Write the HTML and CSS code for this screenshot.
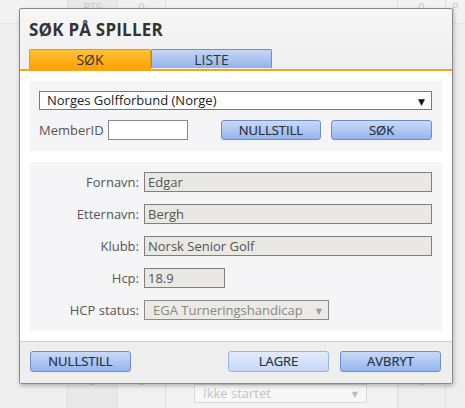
FILE: index.html
```html
<!DOCTYPE html>
<html lang="no">
<head>
<meta charset="utf-8">
<title>Søk på spiller</title>
<link rel="stylesheet" href="styles.css">
</head>
<body>
<div class="backdrop">
  <div class="brow brow-head">
    <div class="bc c1"></div>
    <div class="bc c2">PTS</div>
    <div class="bc c3">0</div>
    <div class="bc c4"></div>
    <div class="bc c5">0</div>
    <div class="bc c6">P</div>
  </div>
  <div class="brow brow-mid">
    <div class="bc c1"></div>
    <div class="bc c2"></div>
    <div class="bc c3"></div>
    <div class="bc c4"></div>
    <div class="bc c5"></div>
    <div class="bc c6"></div>
  </div>
  <div class="brow brow-foot">
    <div class="bc c1"></div>
    <div class="bc c2">0</div>
    <div class="bc c3">0</div>
    <div class="bc c4"><div class="bsel">Ikke startet<span class="barrow">&#9660;</span></div></div>
    <div class="bc c5">0</div>
    <div class="bc c6"></div>
  </div>
</div>

<div class="dialog">
  <div class="dlg-head">
    <h1 class="title">SØK PÅ SPILLER</h1>
    <div class="tabs">
      <div class="tab tab-active">SØK</div>
      <div class="tab tab-idle">LISTE</div>
    </div>
  </div>
  <div class="dlg-body">
    <div class="panel panel-search">
      <div class="sel sel-org">Norges Golfforbund (Norge)<span class="arrow">&#9660;</span></div>
      <div class="search-row">
        <label class="lbl-member">MemberID</label>
        <div class="inp inp-member"></div>
        <div class="btn btn-reset">NULLSTILL</div>
        <div class="btn btn-search">SØK</div>
      </div>
    </div>
    <div class="panel panel-info">
      <div class="frow"><span class="flbl">Fornavn:</span><div class="finp">Edgar</div></div>
      <div class="frow"><span class="flbl">Etternavn:</span><div class="finp">Bergh</div></div>
      <div class="frow"><span class="flbl">Klubb:</span><div class="finp">Norsk Senior Golf</div></div>
      <div class="frow"><span class="flbl">Hcp:</span><div class="finp finp-hcp">18.9</div></div>
      <div class="frow"><span class="flbl">HCP status:</span><div class="finp finp-status">EGA Turneringshandicap<span class="arrow arrow-dim">&#9660;</span></div></div>
    </div>
  </div>
  <div class="dlg-foot">
    <div class="btn btn-foot">NULLSTILL</div>
    <div class="foot-right">
      <div class="btn btn-foot btn-light">LAGRE</div>
      <div class="btn btn-foot">AVBRYT</div>
    </div>
  </div>
</div>
</body>
</html>
```

FILE: styles.css
```css
* { box-sizing: border-box; }
html, body { margin: 0; padding: 0; }
body {
  width: 465px;
  height: 408px;
  overflow: hidden;
  background: #eeeeee;
  font-family: "Open Sans", "DejaVu Sans", sans-serif;
  position: relative;
}

/* backdrop table */
.backdrop {
  display: flex;
  flex-direction: column;
  height: 408px;
  color: #c8c8c8;
  font-size: 13px;
}
.brow { display: flex; }
.brow-head { height: 24px; background: #f2f2f2; border-bottom: 1px solid #e2e2e2; }
.brow-mid { height: 346px; }
.brow-foot { flex: 1; }
.bc { border-right: 1px solid #e0e0e0; text-align: center; line-height: 20px; }
.c1 { width: 68px; }
.c2 { width: 50px; background: #e9e9e9; }
.c3 { width: 48px; background: #f1f1f1; }
.c4 { width: 232px; background: #f3f3f3; padding: 14px 0 0 28px; }
.c5 { width: 48px; }
.c6 { flex: 1; border-right: none; text-align: left; padding-left: 6px; }
.brow-head .bc { line-height: 14px; font-size: 11px; }
.bsel {
  width: 173px;
  height: 19px;
  border: 1px solid #d8d8d8;
  background: #f7f7f7;
  text-align: left;
  padding-left: 8px;
  line-height: 17px;
  color: #c4c4c4;
  font-size: 13px;
  position: relative;
}
.barrow { position: absolute; right: 8px; top: 0; font-size: 8px; color: #bbb; }

/* dialog */
.dialog {
  position: absolute;
  left: 19px;
  top: 8px;
  width: 434px;
  height: 376px;
  border: 1px solid #8a8a8a;
  border-radius: 2px;
  background: linear-gradient(#f6f6f6, #eeeeee 70px);
  box-shadow: 1px 2px 4px rgba(0,0,0,0.25);
  display: flex;
  flex-direction: column;
}
.dlg-head { padding: 0 0 0 9px; border-bottom: 2px solid #f0a81c; }
.title {
  margin: 0;
  padding: 9px 0 0 0;
  height: 40px;
  font-size: 17px;
  font-weight: 700;
  color: #333;
  line-height: 24px;
  letter-spacing: 0.2px;
}
.tabs { display: flex; }
.tab {
  width: 122px;
  height: 20px;
  font-size: 14px;
  font-weight: 400;
  color: #333;
  text-align: center;
  line-height: 19px;
  border-radius: 2px 2px 0 0;
}
.tab-active {
  background: linear-gradient(#ffc23a, #ffa000);
  border: 1px solid #e59a1a;
  border-bottom: none;
}
.tab-idle {
  width: 121px;
  background: linear-gradient(#c5d6f6, #93b3ec);
  border: 1px solid #6e8fcb;
  border-bottom: none;
  height: 19px;
}

.dlg-body {
  background: #ffffff;
  padding: 10px;
  display: flex;
  flex-direction: column;
  gap: 11px;
  border-bottom: 1px solid #cfcfcf;
}
.panel { background: #f5f5f7; }
.panel-search { height: 70px; padding: 10px 10px 0 9px; }
.sel {
  height: 19px;
  border: 1px solid #7a7a7a;
  background: #fff;
  font-size: 13px;
  color: #222;
  line-height: 17px;
  padding-left: 7px;
  position: relative;
}
.arrow { position: absolute; right: 6px; top: 1px; font-size: 9px; color: #111; }
.arrow-dim { color: #999; right: 6px; font-size: 8px; }
.search-row { display: flex; align-items: center; margin-top: 10px; height: 20px; }
.lbl-member { font-size: 13px; color: #555; width: 69px; }
.inp { height: 20px; border: 1px solid #888; background: #fff; }
.inp-member { width: 80px; margin-right: 33px; }
.btn {
  height: 20px;
  border: 1px solid #6f8ec6;
  border-radius: 3px;
  background: linear-gradient(#c9daf8, #95b5ec);
  font-size: 13px;
  font-weight: 400;
  color: #2a2f3a;
  text-align: center;
  line-height: 18px;
  -webkit-text-stroke: 0.2px #2a2f3a;
}
.btn-reset { width: 100px; margin-right: 10px; }
.btn-search { width: 101px; }

.panel-info {
  height: 169px;
  padding: 10px 10px 0 0;
  display: flex;
  flex-direction: column;
  gap: 12px;
}
.frow { display: flex; align-items: center; height: 20px; }
.flbl { width: 110px; text-align: right; font-size: 13px; color: #555; padding-right: 1px; }
.finp {
  margin-left: 4px;
  width: 288px;
  height: 20px;
  border: 1px solid #7f7f7f;
  background: #e9e8e2;
  font-size: 13px;
  color: #555;
  line-height: 18px;
  padding-left: 3px;
  position: relative;
}
.finp-hcp { width: 81px; }
.finp-status { width: 185px; color: #888; padding-left: 8px; background: #eceae5; border-color: #8a8a8a; }

.dlg-foot {
  flex: 1;
  display: flex;
  justify-content: space-between;
  align-items: flex-start;
  padding: 9px 11px 0 10px;
  background: #eeeeee;
}
.foot-right { display: flex; gap: 11px; }
.btn-foot { width: 101px; height: 21px; line-height: 19px; }
.btn-light { background: linear-gradient(#e3ecfc, #c6d8f6); border-color: #9cb4de; }
```
